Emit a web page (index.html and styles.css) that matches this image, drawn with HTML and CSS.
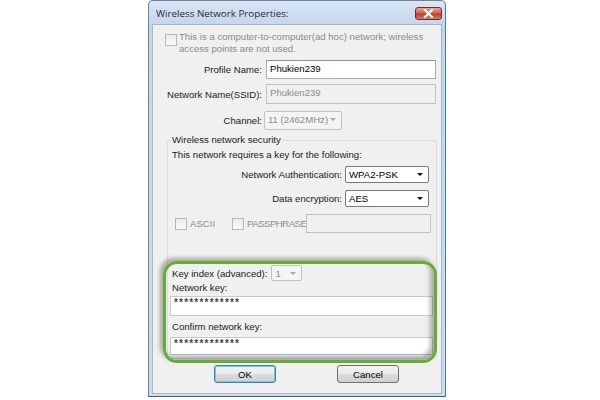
FILE: index.html
```
<!DOCTYPE html>
<html lang="en">
    <head>
        <meta charset="UTF-8">
        <title>Wireless Network Properties</title>
        <link rel="stylesheet" href="styles.css">
    </head>
    <body>
        <div class="window">
            <div class="titlebar">
                <span class="title">Wireless Network Properties:</span>
                <span class="close">
                    <svg width="11" height="9" viewBox="0 0 11 9">
                        <path d="M2 1 L9 8 M9 1 L2 8" stroke="#fff" stroke-width="2.2" stroke-linecap="square"/>
                    </svg>
                </span>
            </div>
            <div class="client">

                <div class="adhoc">
                    <span class="cb"></span>
                    <span class="adhoc-text">This is a computer-to-computer(ad hoc) network; wireless access points are not used.</span>
                </div>

                <div class="row row-profile">
                    <label>Profile Name:</label>
                    <div class="field">Phukien239</div>
                </div>
                <div class="row row-ssid">
                    <label>Network Name(SSID):</label>
                    <div class="field field-off">Phukien239</div>
                </div>
                <div class="row row-channel">
                    <label>Channel:</label>
                    <div class="combo combo-off combo-channel">11 (2462MHz)<span class="arrow"></span></div>
                </div>

                <div class="group">
                    <div class="legend">Wireless network security</div>
                    <div class="requires">This network requires a key for the following:</div>

                    <div class="grow grow-auth">
                        <label>Network Authentication:</label>
                        <div class="combo">WPA2-PSK<span class="arrow"></span></div>
                    </div>
                    <div class="grow grow-enc">
                        <label>Data encryption:</label>
                        <div class="combo">AES<span class="arrow"></span></div>
                    </div>

                    <div class="checks">
                        <span class="cb"></span><span class="cb-label">ASCII</span>
                        <span class="cb cb-pass"></span><span class="cb-label cb-label-pass">PASSPHRASE</span>
                        <div class="field field-off field-pass"></div>
                    </div>

                    <div class="keyindex">
                        <label>Key index (advanced):</label>
                        <div class="combo combo-off combo-key">1<span class="arrow"></span></div>
                    </div>
                    <div class="keylabel">Network key:</div>
                    <div class="field field-key">*************</div>
                    <div class="keylabel keylabel-confirm">Confirm network key:</div>
                    <div class="field field-key field-confirm">*************</div>
                </div>

                <div class="buttons">
                    <button type="button" class="btn btn-default">OK</button>
                    <button type="button" class="btn">Cancel</button>
                </div>

                <!-- green annotation over the key fields -->
                <div class="highlight"></div>
            </div>
        </div>
    </body>
</html>
```

FILE: styles.css
```
body {
    margin: 0;
    background: #ffffff;
    font-family: "Liberation Sans", Arial, sans-serif;
    font-size: 9.6px;
    color: #1a1a1a;
}

.window {
    margin-left: 148px;
    width: 298px;
    height: 397px;
    box-sizing: border-box;
    border: 1px solid #6f8197;
    border-bottom-color: #2f6a86;
    border-right-color: #4a7f9a;
    border-radius: 5px 5px 0 0;
    background: linear-gradient(#d9e6f4, #c3d6ec 24px, #cddcee);
    padding: 0 3px 2px 3px;
    display: flex;
    flex-direction: column;
}

.titlebar {
    height: 23px;
    display: flex;
    align-items: flex-start;
    justify-content: space-between;
}

.title {
    margin-top: 6px;
    margin-left: 4px;
    font-family: "Open Sans", "Liberation Sans", sans-serif;
    font-size: 9.8px;
    color: #1d2a3a;
}

.close {
    margin-top: 6px;
    width: 27px;
    height: 13px;
    box-sizing: border-box;
    border: 1px solid #7b2a22;
    border-radius: 3px;
    background: linear-gradient(#e9a99a, #d2614f 45%, #c0402e 55%, #d87a5c);
    display: flex;
    align-items: center;
    justify-content: center;
}

.client {
    position: relative;
    flex: 1;
    background: #f0f0f0;
    border: 1px solid #a9b8c9;
    padding-top: 6px;
}

.cb {
    display: inline-block;
    width: 10px;
    height: 10px;
    border: 1px solid #b8b8b8;
    background: linear-gradient(#ececec, #fafafa);
    flex: none;
}

.adhoc {
    display: flex;
    margin-left: 12px;
    gap: 2px;
    color: #8a8a8a;
    line-height: 12px;
}

.adhoc .cb {
    margin-top: 3px;
}

.adhoc-text {
    width: 250px;
}

.row {
    display: grid;
    grid-template-columns: 109px auto;
    column-gap: 4px;
    align-items: center;
}

.row label {
    text-align: right;
}

.row-profile { margin-top: 5px; }
.row-ssid { margin-top: 5px; }
.row-channel { margin-top: 7px; }

.field {
    height: 19px;
    width: 170px;
    box-sizing: border-box;
    border: 1px solid #abadb3;
    border-top-color: #8e9196;
    background: #ffffff;
    padding: 2px 3px;
    font-size: 9.6px;
    color: #000;
}

.field-off {
    background: #f0f0f0;
    border-color: #c2c2c2;
    color: #8d8d8d;
    height: 20px;
}

.combo {
    position: relative;
    height: 17px;
    width: 84px;
    box-sizing: border-box;
    border: 1px solid #7a7a7a;
    border-radius: 2px;
    background: #ffffff;
    padding: 2px 3px;
    color: #000;
}

.arrow {
    position: absolute;
    right: 5px;
    top: 6px;
    border-left: 3px solid transparent;
    border-right: 3px solid transparent;
    border-top: 3px solid #111;
}

.combo-off {
    background: #f4f4f4;
    border-color: #c2c2c2;
    color: #8d8d8d;
}

.combo-off .arrow {
    border-top-color: #a8a8a8;
}

.combo-channel {
    width: 78px;
    height: 19px;
    margin-left: -2px;
}

.group {
    margin: 10px 0 0 14px;
    width: 270px;
    box-sizing: border-box;
    border: 1px solid #d5dde3;
    border-radius: 3px;
    padding: 0 0 3px 0;
}

.legend {
    width: max-content;
    margin: -7px 0 0 3px;
    padding: 0 1px;
    background: #f0f0f0;
    line-height: 12px;
}

.requires {
    margin: 3px 0 0 4px;
    line-height: 12px;
}

.grow {
    display: grid;
    grid-template-columns: 174px auto;
    column-gap: 3px;
    align-items: center;
}

.grow label {
    text-align: right;
}

.grow-auth { margin-top: 5px; }
.grow-enc { margin-top: 7px; }

.checks {
    display: flex;
    align-items: center;
    margin-top: 7px;
    padding-left: 7px;
    color: #8d8d8d;
}

.cb-label {
    margin-left: 3px;
}

.cb-label-pass {
    letter-spacing: -0.5px;
}

.cb-pass {
    margin-left: 17px;
}

.field-pass {
    width: 125px;
    height: 19px;
    margin: 0 5px 0 auto;
}

.keyindex {
    display: flex;
    align-items: center;
    margin: 32px 0 0 4px;
    gap: 4px;
}

.combo-key {
    width: 31px;
    height: 16px;
}

.keylabel {
    margin: 1px 0 0 4px;
    line-height: 12px;
}

.keylabel-confirm {
    margin-top: 5px;
}

.field-key {
    width: 263px;
    height: 20px;
    margin: 2px 0 0 2px;
    padding: 0 3px;
    font-size: 10px;
    font-weight: bold;
    letter-spacing: 1.2px;
    color: #444;
    border-color: #c9c9c9;
}

.field-confirm {
    margin-top: 4px;
    height: 18px;
}

.buttons {
    display: flex;
    gap: 61px;
    padding-left: 61px;
    margin-top: 6px;
}

.btn {
    width: 62px;
    height: 18px;
    box-sizing: border-box;
    border: 1px solid #707070;
    border-radius: 3px;
    background: linear-gradient(#f3f3f3, #ebebeb 50%, #dcdcdc 51%, #d0d0d0);
    font-family: "Liberation Sans", Arial, sans-serif;
    font-size: 9.6px;
    color: #000;
    padding: 0;
}

.btn-default {
    border-color: #3c7fb1;
    box-shadow: inset 0 0 0 1px #7ec4ea;
}

.highlight {
    position: absolute;
    left: 10px;
    top: 236px;
    width: 274px;
    height: 102px;
    box-sizing: border-box;
    border: 3px solid #68ad2f;
    border-radius: 14px;
    box-shadow: -3px -3px 4px rgba(0, 0, 0, 0.3), inset -4px -4px 4px rgba(0, 0, 0, 0.28);
}
```
